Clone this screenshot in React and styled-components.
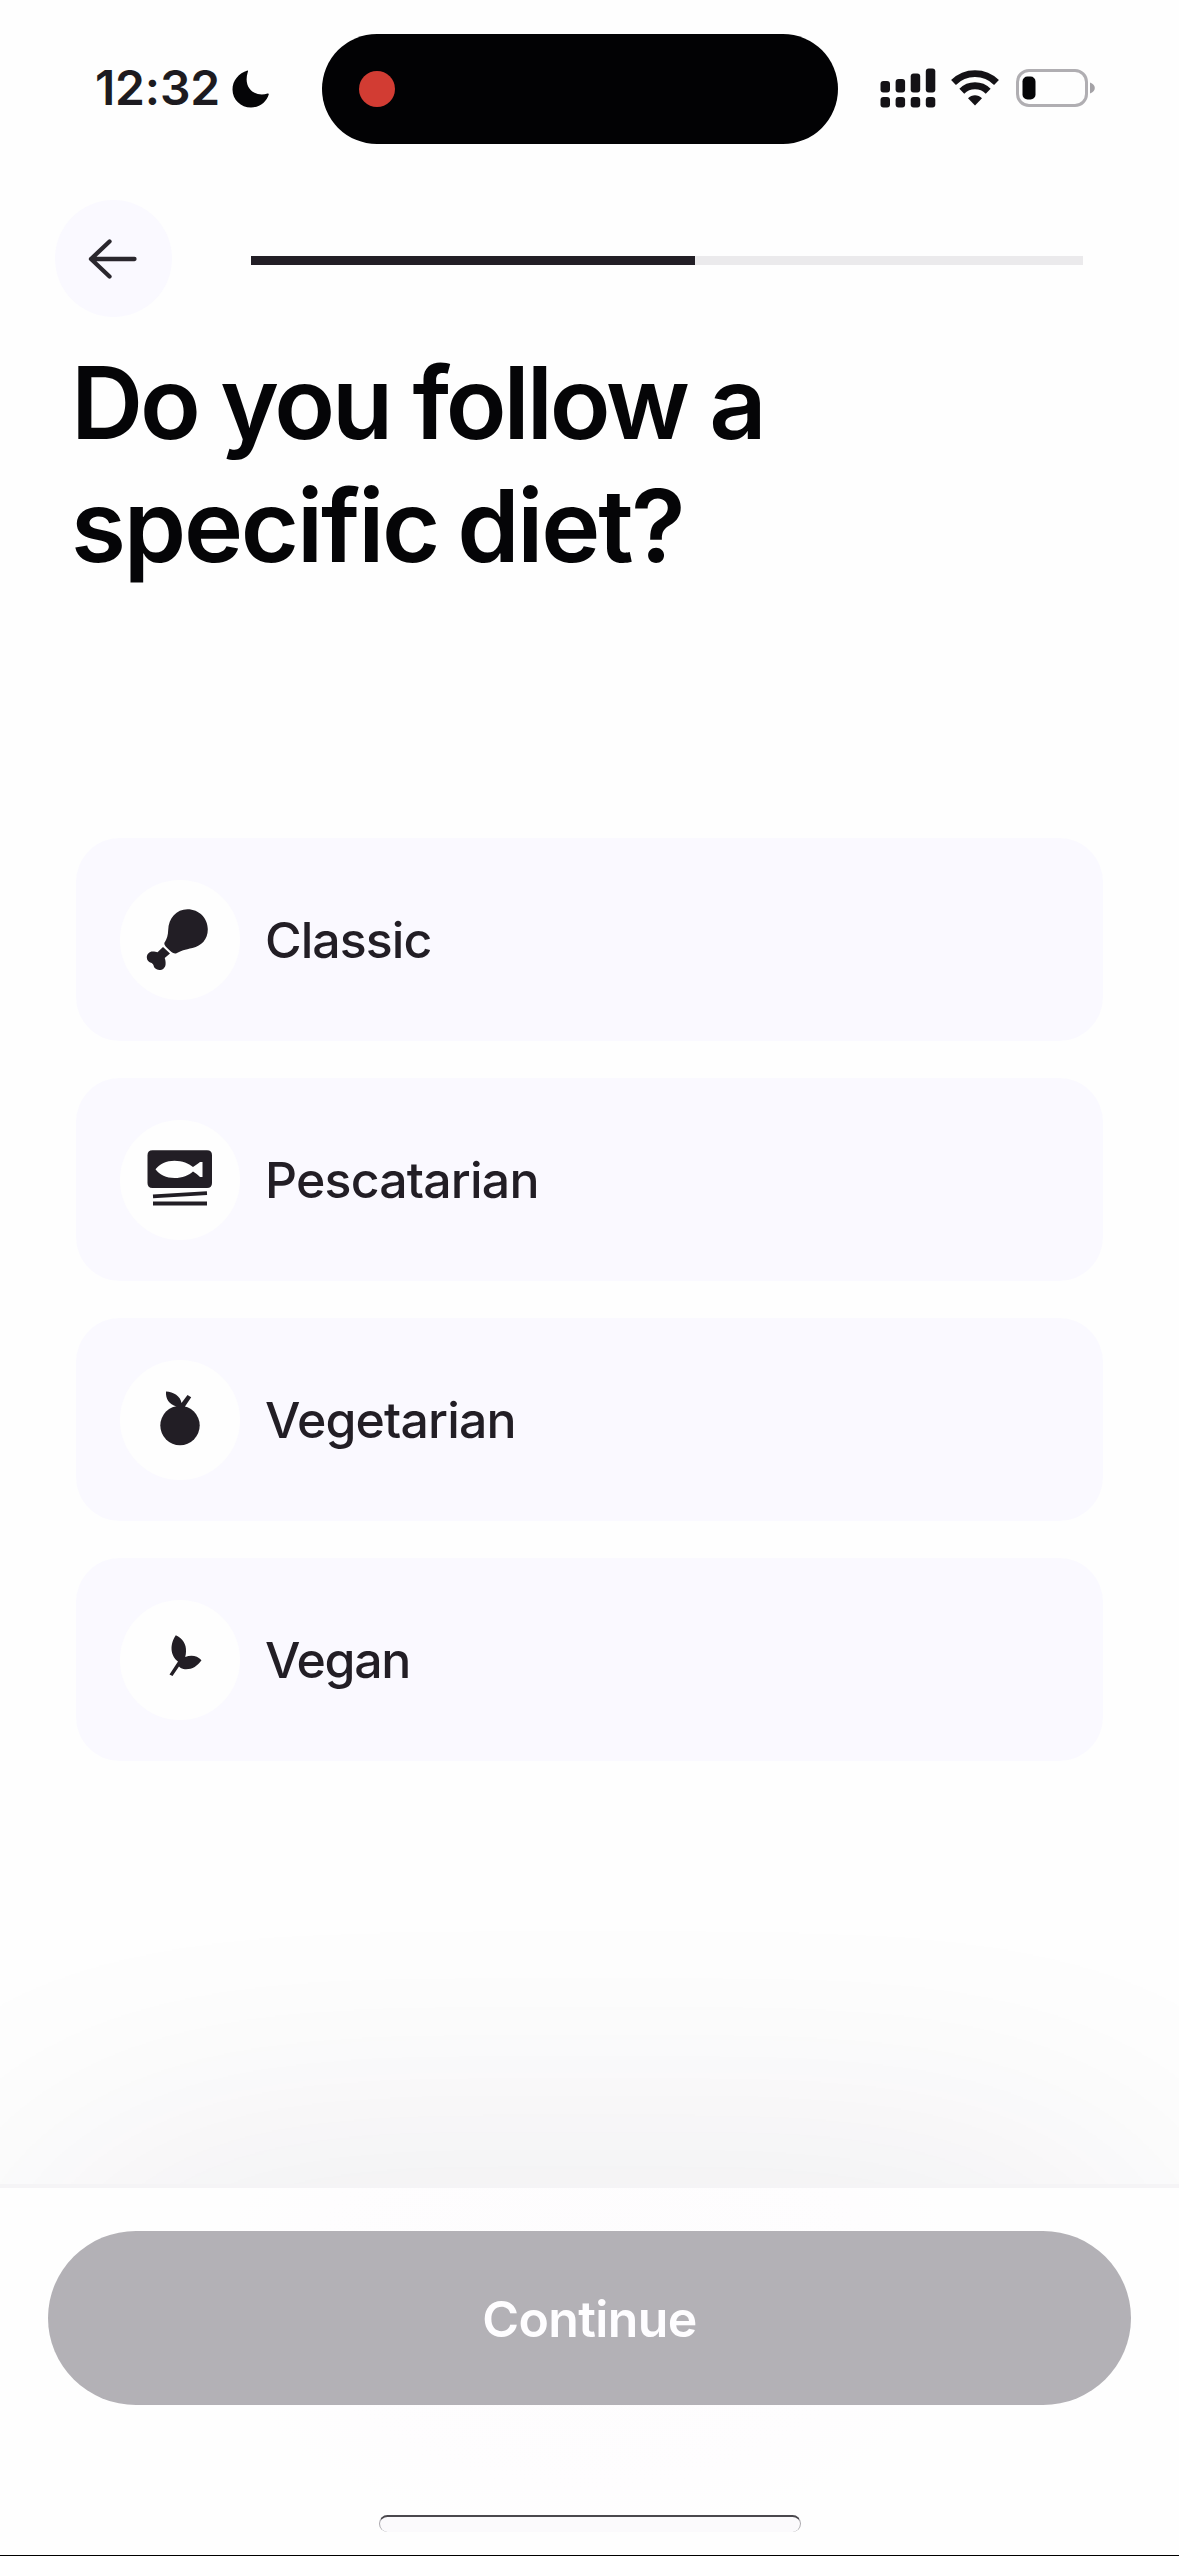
import React from "react";
import styled, { createGlobalStyle } from "styled-components";

const ink = "#221e25";

const GlobalStyle = createGlobalStyle`
  * { box-sizing: border-box; }
  html, body { margin: 0; padding: 0; background: #fefefe; }
  body { font-family: Inter, "Liberation Sans", sans-serif; overflow: hidden; }
`;

const Screen = styled.div`
  width: 1179px;
  height: 2556px;
  display: flex;
  flex-direction: column;
  background: #fefefe;
  border-bottom: 1px solid #000;
`;

const StatusBar = styled.header`
  height: 178px;
  padding: 34px 80px 0 95px;
  display: flex;
  align-items: flex-start;
`;

const Clock = styled.div`
  width: 227px;
  height: 110px;
  flex: none;
  display: flex;
  align-items: center;
  gap: 12px;
`;

const Time = styled.span`
  width: 125px;
  font-size: 48px;
  line-height: 56px;
  padding-bottom: 2px;
  font-weight: 600;
  letter-spacing: -0.2px;
  color: #1d1b20;
  white-space: nowrap;
`;

const Island = styled.div`
  width: 516px;
  height: 110px;
  flex: none;
  border-radius: 55px;
  background: #020204;
  display: flex;
  align-items: center;
  padding-left: 37px;
`;

const RecordingDot = styled.span`
  width: 36px;
  height: 36px;
  border-radius: 50%;
  background: #d23c33;
`;

const StatusIcons = styled.div`
  height: 110px;
  margin-left: 42px;
  display: flex;
  align-items: center;
  padding-bottom: 2px;
`;

const NavRow = styled.nav`
  height: 162px;
  padding: 22px 96px 0 55px;
  display: flex;
  align-items: flex-start;
  gap: 79px;
`;

const BackButton = styled.button`
  width: 117px;
  height: 117px;
  padding: 0 1px 0 0;
  border: 0;
  border-radius: 50%;
  background: #faf9ff;
  display: grid;
  place-items: center;
`;

const Track = styled.div`
  flex: 1;
  height: 9px;
  margin-top: 56px;
  background: #ebeaec;
`;

const Progress = styled.div`
  width: ${(p) => p.$value}%;
  height: 100%;
  background: ${ink};
`;

const Title = styled.h1`
  margin: 0;
  height: 498px;
  padding: 1px 71px 0;
  font-size: 100px;
  line-height: 123px;
  font-weight: 600;
  color: #050507;
`;

const TitleLine = styled.span`
  display: block;
  letter-spacing: ${(p) => p.$tracking}px;
  word-spacing: ${(p) => p.$gap}px;
  white-space: nowrap;
`;

const Options = styled.ul`
  list-style: none;
  margin: 0;
  padding: 0 76px;
  display: flex;
  flex-direction: column;
  gap: 37px;
`;

const Option = styled.li`
  height: 203px;
  padding-left: 44px;
  border-radius: 44px;
  background: #faf9ff;
  display: flex;
  align-items: center;
  gap: 25px;
`;

const IconDisc = styled.span`
  width: 120px;
  height: 120px;
  border-radius: 50%;
  background: #fefefe;
  display: block;
`;

const OptionLabel = styled.span`
  font-size: 50px;
  line-height: 60px;
  font-weight: 500;
  letter-spacing: ${(p) => p.$tracking}px;
  color: ${ink};
`;

const Glow = styled.div`
  flex: 1;
  position: relative;
  overflow: hidden;

  &::after {
    content: "";
    position: absolute;
    left: 48px;
    right: 48px;
    top: calc(100% + 47px);
    height: 174px;
    border-radius: 87px;
    background: #2c1c3c;
    filter: blur(165px);
    opacity: 0.15;
  }
`;

const Footer = styled.footer`
  height: 371px;
  padding: 43px 48px 0;
  border-top: 4px solid #f5f4f6;
  background: radial-gradient(ellipse 380px 240px at 50% 30%, #fdfcfd 0%, #fefdfe 80%, #fefefe 100%);
  display: flex;
  flex-direction: column;
  align-items: center;
`;

const ContinueButton = styled.button`
  width: 1083px;
  height: 174px;
  flex: none;
  padding: 2px 0 0;
  border: 0;
  border-radius: 88px / 87px;
  background: #b3b1b6;
  color: #fefdff;
  font-family: inherit;
  font-size: 50px;
  line-height: 60px;
  font-weight: 600;
  letter-spacing: -0.6px;
`;

const HomeIndicator = styled.div`
  width: 422px;
  height: 17px;
  margin-top: 110px;
  border-radius: 9px;
  background: #fbfafc;
  border-top: 2px solid #4a484d;
  border-left: 1px solid #aaa8ad;
  border-right: 1px solid #aaa8ad;
`;

const Moon = () => (
  <svg width="37" height="38" viewBox="0 0 37 38">
    <path
      d="M15.5 0.5C6.800 3.200 0.500 10.500 0.500 19.500C0.500 29.800 8.800 37.500 19 37.500C27.500 37.500 34.600 32.200 36.800 24.300C37 23.600 36.200 23.200 35.600 23.500C24 27.500 10.500 19 15.800 2C16.100 1.200 16.200 0.300 15.500 0.500Z"
      fill="#050507"
    />
  </svg>
);

const Signal = () => (
  <svg width="56" height="40" viewBox="0 0 56 40">
    {[13, 11, 5.5, 0.5].map((y, i) => (
      <g key={i} fill="#141216">
        <rect x={0.5 + i * 15.1} y={y} width="9.500" height={24.5 - y} rx="3" />
        <rect x={0.5 + i * 15.1} y="29" width="9.500" height="10.500" rx="3" />
      </g>
    ))}
  </svg>
);

const Wifi = () => (
  <svg width="48" height="36" viewBox="0 0 48 36">
    <g fill="none" stroke="#141216" strokeWidth="6.900">
      <path d="M2.500 12.500A30.500 30.500 0 0 1 45.500 12.500" />
      <path d="M10.800 21.200A18.700 18.700 0 0 1 37.200 21.200" />
    </g>
    <path d="M24 35.500L17 28.200C20.800 24.200 27.200 24.200 31 28.200Z" fill="#141216" />
  </svg>
);

const Battery = () => (
  <svg width="80" height="38" viewBox="0 0 80 38">
    <rect x="1.500" y="1.500" width="69" height="35" rx="11.500" fill="none" stroke="#b0aeb2" strokeWidth="3" />
    <rect x="6.500" y="7.500" width="13" height="23" rx="5" fill="#050507" />
    <path d="M74 13.500C77 14.500 78.800 16.500 78.800 19C78.800 21.500 77 23.500 74 24.500Z" fill="#a4a2a6" />
  </svg>
);

const SignalSlot = styled.span`
  display: flex;
  margin-right: 15px;
`;

const WifiSlot = styled.span`
  display: flex;
  margin-right: 17px;
`;

const ArrowLeft = () => (
  <svg width="50" height="44" viewBox="0 0 50 44" fill="none" stroke="#2a272d" strokeWidth="4.300" strokeLinecap="round" strokeLinejoin="round">
    <path d="M46.500 22H3M21.500 4.500L3 22L21.500 39.500" />
  </svg>
);

const Drumstick = () => (
  <svg width="120" height="120" viewBox="-1 0 120 120" fill={ink}>
    <path d="M66.500 29.200C78 29.200 86.800 38 86.800 49.300C86.800 59.500 80.500 66 71.500 68C64 69.600 59.500 71 55.500 73.200C53.500 73.800 51.500 73 48.500 70.200C45 67 43 65.200 43.300 63C46 59 47 55.500 47.200 50C47.500 38 55.500 29.200 66.500 29.200Z" />
    <path d="M42 67L49 73.600L43.700 78C44.300 79.500 44.800 81.500 44.600 84.200C44.300 87.700 41.800 90 38.300 90C35.200 90 32.900 88 32.500 85.300C31.900 83.900 31.200 83.200 29.900 82.800C27.500 82 25.800 80.200 25.800 77.300C25.800 73.800 28.500 71.400 31.500 71.400C33.700 71.400 35.300 71.800 36.500 72.300Z" />
  </svg>
);

const FishTin = () => (
  <svg width="120" height="120" viewBox="-0.5 0 120 120" fill={ink}>
    <path
      fillRule="evenodd"
      d="M32 30.300H86.500Q91.500 30.300 91.500 35.300V63Q91.500 68 86.500 68H32Q27 68 27 63V35.300Q27 30.300 32 30.300ZM35 49.300C39 44 46 40.700 54 40.700C62 40.700 68 43.500 72.500 47C75 45.500 77.500 43.500 79.500 42H82V57H79.500C77.500 55 75 53 72.500 51.500C68 55.500 62 58 54 58C46 58 39 55 35 49.300Z"
    />
    <path d="M32.500 76.300L86.500 73.200M32.500 83.500H86.500" stroke={ink} strokeWidth="3.800" />
  </svg>
);

const Fruit = () => (
  <svg width="120" height="120" viewBox="-1 0 120 120" fill={ink}>
    <circle cx="59" cy="65.500" r="19.700" />
    <path d="M45 31.500C52.500 32 59.500 36 60.500 43L66.500 35L70.200 37.200L64 46.500V49H54.500L55.500 46.500C48 44 44.500 39 45 31.500Z" />
  </svg>
);

const Leaves = () => (
  <svg width="120" height="120" viewBox="-1 0 120 120" fill={ink}>
    <path d="M54.800 35.300C61.500 38.500 65.500 44 65 51.500C65 53.500 64.700 55.300 64.200 57C70 54.600 76 55.300 80.500 60.200C76 66.700 70 70 62.500 69C60.200 68.500 59 67.700 58 66.500L51.500 76L48.500 74.500L57 61.500C50.500 57 47.500 46 54.800 35.300Z" />
  </svg>
);

const diets = [
  { name: "Classic", Icon: Drumstick, tracking: -0.95 },
  { name: "Pescatarian", Icon: FishTin, tracking: -0.8 },
  { name: "Vegetarian", Icon: Fruit, tracking: -0.85 },
  { name: "Vegan", Icon: Leaves, tracking: -1.3 },
];

export default function App() {
  return (
    <>
      <GlobalStyle />
      <Screen>
        <StatusBar>
          <Clock>
            <Time>12:32</Time>
            <Moon />
          </Clock>
          <Island>
            <RecordingDot />
          </Island>
          <StatusIcons>
            <SignalSlot>
              <Signal />
            </SignalSlot>
            <WifiSlot>
              <Wifi />
            </WifiSlot>
            <Battery />
          </StatusIcons>
        </StatusBar>
        <NavRow>
          <BackButton aria-label="Back">
            <ArrowLeft />
          </BackButton>
          <Track>
            <Progress $value={53.4} />
          </Track>
        </NavRow>
        <Title>
          <TitleLine $tracking={-3.15} $gap={0.5}>Do you follow a</TitleLine>
          <TitleLine $tracking={-2.2} $gap={-4}>specific diet?</TitleLine>
        </Title>
        <Options>
          {diets.map(({ name, Icon, tracking }) => (
            <Option key={name}>
              <IconDisc>
                <Icon />
              </IconDisc>
              <OptionLabel $tracking={tracking}>{name}</OptionLabel>
            </Option>
          ))}
        </Options>
        <Glow />
        <Footer>
          <ContinueButton>Continue</ContinueButton>
          <HomeIndicator />
        </Footer>
      </Screen>
    </>
  );
}
